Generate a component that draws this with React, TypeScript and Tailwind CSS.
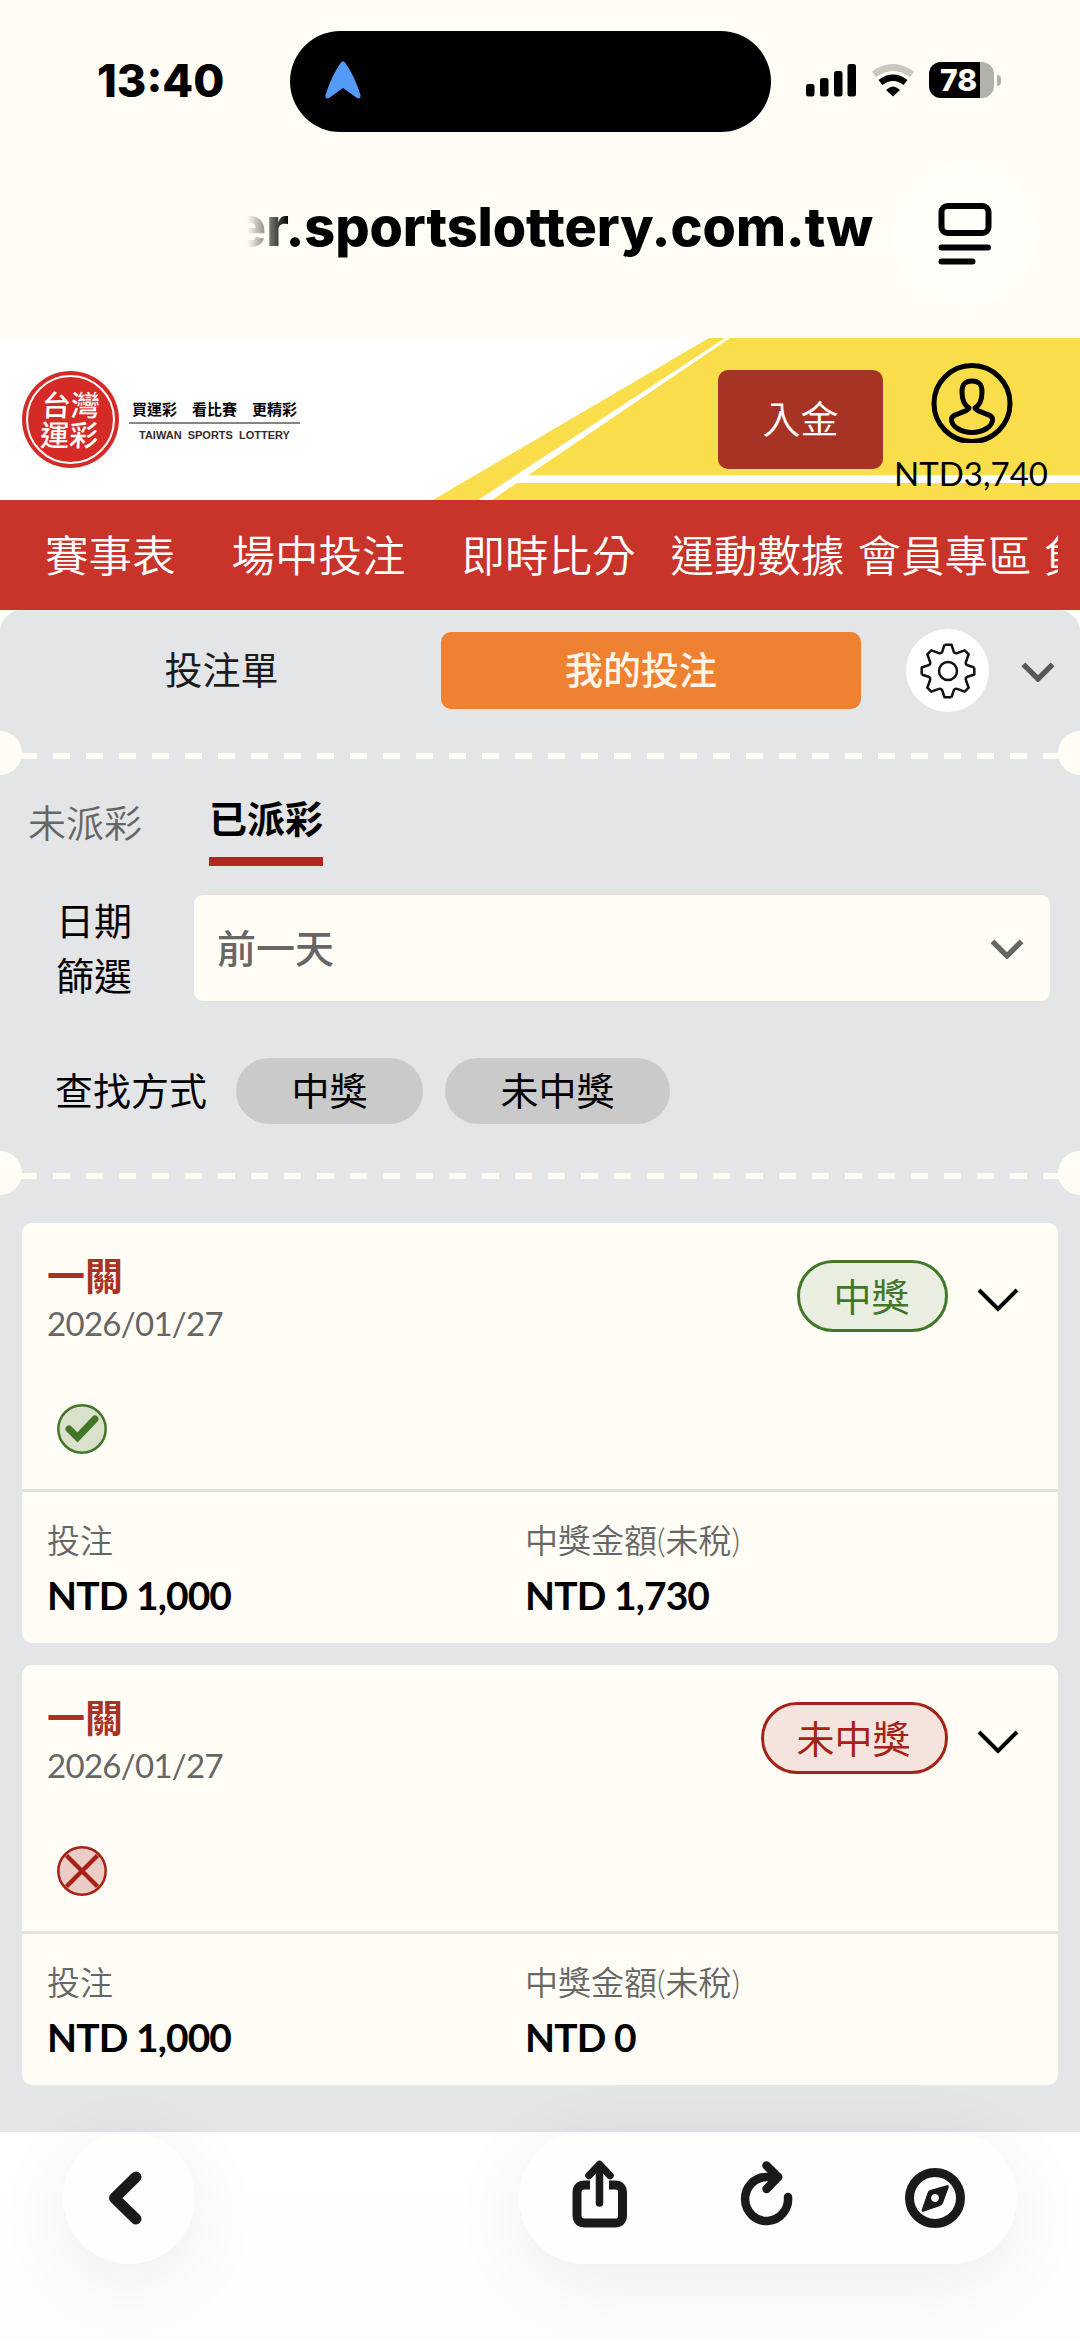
import type { ReactNode } from 'react'

type Bet = {
  title: string
  date: string
  won: boolean
  stake: string
  payout: string
}

const bets: Bet[] = [
  { title: '一關', date: '2026/01/27', won: true, stake: 'NTD 1,000', payout: 'NTD 1,730' },
  { title: '一關', date: '2026/01/27', won: false, stake: 'NTD 1,000', payout: 'NTD 0' },
]

function Chevron({ className, strokeWidth }: { className: string; strokeWidth: number }) {
  return (
    <svg className={className} viewBox="0 0 44 26" fill="none" stroke="currentColor" strokeWidth={strokeWidth}>
      <path d="M3 3l19 19L41 3" />
    </svg>
  )
}

function StatusBar() {
  return (
    <div className="flex h-[162px] items-start pt-[31px] pl-[97px]">
      <div className="w-[193px] pt-[22px] font-['Inter',sans-serif] text-[45px] leading-[56px] font-extrabold">13:40</div>
      <div className="h-[101px] w-[481px] rounded-full bg-black pt-[30px] pl-[35px]">
        <svg className="h-[38px] w-[36px]" viewBox="0 0 36 38" fill="#549bf8">
          <path d="M15.500 2Q18-1.500 20.500 2Q30 16 35.500 34Q36 38.500 32 37L18 27L4 37Q0 38.500.5 34Q6 16 15.500 2Z" />
        </svg>
      </div>
      <svg className="mt-[33px] ml-[35px] h-[33px] w-[51px]" viewBox="0 0 51 33">
        <rect x="0" y="20" width="8.500" height="12.500" rx="2.500" />
        <rect x="14" y="14" width="8.500" height="18.500" rx="2.500" />
        <rect x="28" y="7" width="8.500" height="25.500" rx="2.500" />
        <rect x="41.500" y="0" width="8.500" height="32.500" rx="2.500" />
      </svg>
      <svg className="mt-[33px] ml-[14px] h-[33px] w-[44px]" viewBox="0 0 44 33" fill="none">
        <path d="M3 10.500Q22-3.500 41 10.500" stroke="#c9c8c3" strokeWidth="7" />
        <path d="M9.500 18.500Q22 9 34.500 18.500" stroke="#000" strokeWidth="6.500" />
        <path d="M15 26Q22 19 29 26L22 32.500Z" fill="#000" />
      </svg>
      <div className="mt-[31px] ml-[14px] flex h-[36px] items-center">
        <div className="flex h-[36px] w-[65px] items-center overflow-hidden rounded-[12px] bg-[#b3b1ab]">
          <div className="h-full w-[51px] bg-black pl-[11px] font-['Inter',sans-serif] text-[30px] leading-[36px] font-extrabold text-[#fffdf5]">
            78
          </div>
        </div>
        <div className="ml-[3px] h-[11px] w-[4px] rounded-r-full bg-[#b3b1ab]" />
      </div>
    </div>
  )
}

function AddressBar() {
  return (
    <div className="flex h-[176px] items-start">
      <div className="flex h-[144px] w-[893px] justify-end pr-[20px] pt-[31px]">
        <div className="flex w-[680px] justify-end [mask-image:linear-gradient(to_right,transparent_54px,black_96px)]">
          <span className="font-['Inter',sans-serif] text-[54px] leading-[68px] font-extrabold tracking-[-0.1px] whitespace-nowrap">
            er.sportslottery.com.tw
          </span>
        </div>
      </div>
      <div className="flex size-[144px] items-center justify-center rounded-full border-2 border-[#fffffa] bg-[#fffef8]">
        <svg className="h-[64px] w-[54px]" viewBox="0 0 54 64" fill="none" stroke="#000" strokeWidth="6" strokeLinecap="round">
          <rect x="3.500" y="4" width="47" height="27" rx="6" />
          <path d="M3.500 45.500h46.500M3.500 59.500h31" />
        </svg>
      </div>
    </div>
  )
}

function Logo() {
  return (
    <div className="flex items-center gap-[10px]">
      <div className="flex size-[97px] items-center justify-center rounded-full bg-[#d42b27] p-[4px]">
        <div className="flex size-full items-center justify-center rounded-full border-2 border-white">
          <div className="-skew-x-3 text-center text-[29px] leading-[30px] font-medium text-white">
            台灣
            <br />
            運彩
          </div>
        </div>
      </div>
      <div className="w-[171px]">
        <div className="flex justify-between px-[3px] text-[15px] leading-[25px] font-bold">
          <span>買運彩</span>
          <span>看比賽</span>
          <span>更精彩</span>
        </div>
        <div className="border-t-2 border-[#8a8384] pt-[4px] text-center font-['Liberation_Sans',sans-serif] text-[11px] leading-[14px] font-bold whitespace-nowrap text-[#332c2b]">
          TAIWAN&nbsp; SPORTS&nbsp; LOTTERY
        </div>
      </div>
    </div>
  )
}

function Header() {
  return (
    <header className="relative h-[162px] bg-white">
      {/* Court lines backdrop */}
      <svg className="absolute inset-0 h-[162px] w-[1080px]" viewBox="0 0 1080 162">
        <path d="M433 162L709 0H1080V162Z" fill="#f9dd4a" />
        <path d="M478 162L725 0h5L492 162Z" fill="#fff" />
        <path d="M515 145L528 137H1080v8Z" fill="#fff" />
      </svg>
      <div className="relative flex h-full items-start">
        <div className="w-[718px] pt-[33px] pl-[22px]">
          <Logo />
        </div>
        <button className="mt-[32px] h-[99px] w-[165px] rounded-[10px] bg-[#a73325] pb-[2px] text-[38px] font-[350] text-white">入金</button>
        <div className="ml-[13px] flex w-[150px] flex-col items-center pt-[25px]">
          <svg className="ml-[2px] h-[80px] w-[82px]" viewBox="0 0 82 80" fill="none" stroke="#000" strokeWidth="5">
            <circle cx="41" cy="40.500" r="38" />
            <path d="M38 45C33 42 31 36 31 29C31 21 34 18 41 18S51 21 51 29C51 36 49 42 44 45C46 50 61 50 61.500 56C62 64 51 69.500 41 69.500S20 64 20.500 56C21 50 36 50 38 45Z" strokeLinejoin="round" />
          </svg>
          <span className="mt-[10px] text-[33px] leading-[40px] whitespace-nowrap">NTD3,740</span>
        </div>
      </div>
    </header>
  )
}

function NavBar() {
  return (
    <nav className="flex h-[110px] items-center bg-[#c8332a] pr-[22px] pl-[45px]">
      <div className="flex w-[1013px] overflow-hidden text-[43.500px] leading-[60px] font-[350] whitespace-nowrap text-white">
        <a className="mr-[56px]">賽事表</a>
        <a className="mr-[56px]">場中投注</a>
        <a className="mr-[35px]">即時比分</a>
        <a className="mr-[13px]">運動數據</a>
        <a className="mr-[12px]">會員專區</a>
        <a>負</a>
      </div>
    </nav>
  )
}

// Ticket style perforation with a notch on each side
function Perforation() {
  return (
    <div className="flex h-[44px] items-center justify-between overflow-hidden">
      <div className="-ml-[22px] size-[44px] shrink-0 rounded-full bg-[#fffdf5]" />
      <div className="-mx-[2px] mt-[6px] h-[6px] grow bg-[repeating-linear-gradient(to_right,#fffdf5_0px,#fffdf5_17px,transparent_17px,transparent_33px)]" />
      <div className="-mr-[22px] size-[44px] shrink-0 rounded-full bg-[#fffdf5]" />
    </div>
  )
}

function GearIcon() {
  return (
    <svg className="size-[58px]" viewBox="-29 -29 58 58" fill="none" stroke="#111" strokeWidth="2.500" strokeLinejoin="round">
      <circle r="9" />
      {[0, 90, 180, 270].map((angle) => (
        <path
          key={angle}
          transform={`rotate(${angle})`}
          d="M-3.500-26.300H3.500L5.700-19.500Q6.500-17.300 9-17.900L16.700-20.700L20.700-16.700L17.900-9Q17.300-6.500 19.500-5.700L26.300-3.500"
        />
      ))}
    </svg>
  )
}

function SlipTabs() {
  return (
    <div className="flex h-[121px] items-start pl-[22px]">
      <button className="mt-[22px] h-[77px] w-[399px] pb-[2px] text-[38px] text-[#1b1b1b]">投注單</button>
      <button className="mt-[22px] ml-[20px] h-[77px] w-[420px] rounded-[10px] bg-[#ee8232] pr-[20px] pb-[2px] text-[38px] font-medium text-[#fff5e9]">
        我的投注
      </button>
      <div className="mt-[19px] ml-[45px] flex size-[83px] items-center justify-center rounded-full bg-white">
        <GearIcon />
      </div>
      <Chevron className="mt-[52px] ml-[32px] h-[20px] w-[34px] text-[#585858]" strokeWidth={7} />
    </div>
  )
}

function Filters() {
  return (
    <div className="h-[376px]">
      <div className="flex h-[91px] pt-[15px] pl-[28px] text-[38px] leading-[56px]">
        <button className="mt-[4px] mr-[67px] h-[56px] font-[350] text-[#666]">未派彩</button>
        <button className="h-[76px] border-b-[9px] border-[#ac2820] pb-[11px] font-bold text-black">已派彩</button>
      </div>
      <div className="mt-[27px] flex pr-[30px] pl-[56px]">
        <label className="w-[138px] text-[38px] leading-[55px]">
          日期
          <br />
          篩選
        </label>
        <div className="flex h-[110px] grow items-center justify-between rounded-[10px] border-y-2 border-[#e7e3dc] bg-[#fffdf5] pr-[26px] pl-[23px] text-[#666]">
          <span className="text-[39px] leading-[56px] font-medium">前一天</span>
          <Chevron className="mt-[2px] h-[20px] w-[34px]" strokeWidth={7} />
        </div>
      </div>
      <div className="mt-[55px] flex h-[66px] items-center pl-[55px] text-[38px] leading-[56px]">
        <span className="w-[181px] pb-[2px]">查找方式</span>
        <button className="mr-[22px] h-[66px] w-[187px] rounded-full bg-[#cacaca] pb-[2px]">中獎</button>
        <button className="h-[66px] w-[225px] rounded-full bg-[#cacaca] pb-[2px]">未中獎</button>
      </div>
    </div>
  )
}

function ResultIcon({ won }: { won: boolean }) {
  return won ? (
    <svg className="size-[50px]" viewBox="0 0 50 50" fill="none" stroke="#427729">
      <circle cx="25" cy="25" r="23.700" fill="#d9e1cd" strokeWidth="2.500" />
      <path d="M12 25l8.500 8.500L38 15" strokeWidth="7" strokeLinecap="round" />
    </svg>
  ) : (
    <svg className="size-[50px]" viewBox="0 0 50 50" fill="none" stroke="#a62116">
      <circle cx="25" cy="25" r="23.700" fill="#ecccc7" strokeWidth="2.500" />
      <path d="M9.500 9.500l31 31M40.500 9.500l-31 31" strokeWidth="4.500" />
    </svg>
  )
}

function Amount({ label, children }: { label: string; children: ReactNode }) {
  return (
    <div className="w-[478px]">
      <div className="text-[33px] leading-[48px] font-[350] text-[#666]">{label}</div>
      <div className="mt-[5px] text-[39px] leading-[52px] font-bold tracking-[-0.9px] whitespace-nowrap">{children}</div>
    </div>
  )
}

function BetCard({ bet }: { bet: Bet }) {
  const pill = bet.won
    ? 'w-[151px] border-[#427729] bg-[#eaeee0] text-[#427729]'
    : 'w-[187px] border-[#a62116] bg-[#f5e4de] text-[#a62116]'

  return (
    <article className="h-[420px] rounded-[10px] bg-[#fffdf5]">
      <div className="h-[269px] border-b-3 border-[#e7e3dc] pt-[25px] pr-[38px] pl-[25px]">
        <div className="flex h-[156px] items-start">
          <div className="grow">
            <h2 className="text-[38px] leading-[54px] font-bold text-[#a93226]">{bet.title}</h2>
            <div className="mt-[-1px] text-[33px] leading-[44px] tracking-[-0.7px] text-[#666]">{bet.date}</div>
          </div>
          <div className={`mt-[12px] flex h-[72px] items-center justify-center rounded-full border-3 pr-[2px] text-[38px] ${pill}`}>
            {bet.won ? '中獎' : '未中獎'}
          </div>
          <Chevron className="mt-[39px] ml-[28px] h-[26px] w-[44px] text-black" strokeWidth={4} />
        </div>
        <div className="pl-[10px]">
          <ResultIcon won={bet.won} />
        </div>
      </div>
      <div className="flex pt-[24px] pl-[25px]">
        <Amount label="投注">{bet.stake}</Amount>
        <Amount label="中獎金額(未稅)">{bet.payout}</Amount>
      </div>
    </article>
  )
}

function BottomBar() {
  return (
    <footer className="relative flex h-[209px] items-start justify-between bg-gradient-to-b from-white to-[#fdfdfd] pr-[63px] pl-[63px] text-[#1a1a1a]">
      <button className="flex size-[132px] items-center justify-center rounded-full bg-[#fefefd] shadow-[0_16px_80px_rgba(0,0,0,0.07)]">
        <svg className="mr-[8px] h-[54px] w-[34px]" viewBox="0 0 34 54" fill="none" stroke="currentColor" strokeWidth="11" strokeLinecap="round" strokeLinejoin="round">
          <path d="M28 6L6.500 27L28 48" />
        </svg>
      </button>
      <div className="flex h-[132px] w-[498px] rounded-full bg-[#fefefd] pl-[50px] shadow-[0_16px_80px_rgba(0,0,0,0.07)]">
        <svg className="mt-[26px] h-[72px] w-[60px]" viewBox="0 0 60 72" fill="none" stroke="currentColor" strokeWidth="9" strokeLinecap="round" strokeLinejoin="round">
          <path d="M21 27H16Q8 27 8 35V57Q8 65 16 65H46Q53.500 65 53.500 57V35Q53.500 27 46 27H40" strokeLinecap="butt" />
          <path d="M30.500 45V7M20 17.500L30.500 6.500L41 17.500" strokeWidth="7.500" />
        </svg>
        <svg className="mt-[26px] ml-[110px] h-[72px] w-[56px]" viewBox="0 0 56 72" fill="none" stroke="currentColor" strokeWidth="8.500" strokeLinecap="round" strokeLinejoin="round">
          <path d="M49 39A21.500 22 0 1 1 27.500 19H39" />
          <path d="M27.500 7.500L39 19L27.500 31" />
        </svg>
        <svg className="mt-[36px] ml-[110px] size-[60px]" viewBox="0 0 60 60" fill="none" stroke="currentColor">
          <circle cx="30" cy="30" r="25.500" strokeWidth="9" />
          <path fillRule="evenodd" d="M41 17.500Q44.500 15.500 43.500 20L38 35Q37 37 35 38L19 43.500Q15.500 44.500 17 41L22.500 25Q23 23 25 22ZM30 26a4 4 0 1 0 .1 0Z" fill="currentColor" stroke="none" />
        </svg>
      </div>
    </footer>
  )
}

export default function App() {
  return (
    <div className="h-[2341px] w-[1080px] overflow-hidden bg-[#fffdf5] font-['Lato','Noto_Sans_CJK_TC',sans-serif] text-black">
      <StatusBar />
      <AddressBar />
      <Header />
      <NavBar />
      <main className="h-[1522px] rounded-t-[22px] bg-[#e4e5e7]">
        <SlipTabs />
        <Perforation />
        <Filters />
        <Perforation />
        <section className="mt-[28px] flex flex-col gap-[22px] px-[22px]">
          {bets.map((bet, i) => (
            <BetCard key={i} bet={bet} />
          ))}
        </section>
      </main>
      <BottomBar />
    </div>
  )
}
